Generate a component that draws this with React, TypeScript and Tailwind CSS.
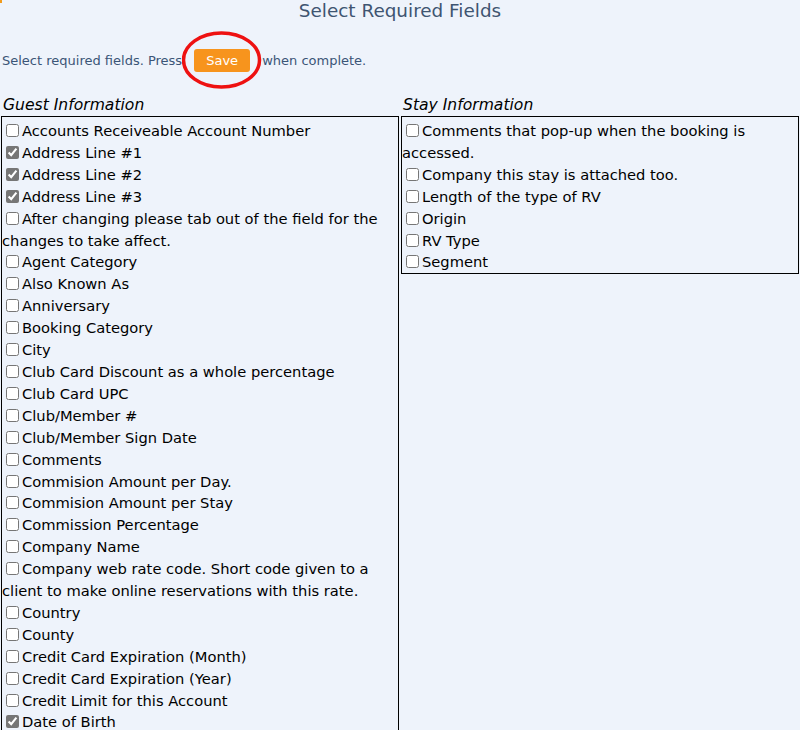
import React from "react";

const guestFields: [string, boolean][] = [
  ["Accounts Receiveable Account Number", false],
  ["Address Line #1", true],
  ["Address Line #2", true],
  ["Address Line #3", true],
  ["After changing please tab out of the field for the changes to take affect.", false],
  ["Agent Category", false],
  ["Also Known As", false],
  ["Anniversary", false],
  ["Booking Category", false],
  ["City", false],
  ["Club Card Discount as a whole percentage", false],
  ["Club Card UPC", false],
  ["Club/Member #", false],
  ["Club/Member Sign Date", false],
  ["Comments", false],
  ["Commision Amount per Day.", false],
  ["Commision Amount per Stay", false],
  ["Commission Percentage", false],
  ["Company Name", false],
  ["Company web rate code. Short code given to a client to make online reservations with this rate.", false],
  ["Country", false],
  ["County", false],
  ["Credit Card Expiration (Month)", false],
  ["Credit Card Expiration (Year)", false],
  ["Credit Limit for this Account", false],
  ["Date of Birth", true],
  ["Email Address", false],
];

const stayFields: [string, boolean][] = [
  ["Comments that pop-up when the booking is accessed.", false],
  ["Company this stay is attached too.", false],
  ["Length of the type of RV", false],
  ["Origin", false],
  ["RV Type", false],
  ["Segment", false],
];

const FieldBox = ({ fields }: { fields: [string, boolean][] }) => (
  <div className="border border-black pt-[3px]">
    {fields.map(([label, checked]) => (
      <div key={label} className="leading-[21.9px]">
        <input
          type="checkbox"
          defaultChecked={checked}
          className="accent-[#767676] mt-[3px] mr-[3px] mb-[3px] ml-[4px] align-[-1px]"
        />
        {label}
      </div>
    ))}
  </div>
);

export default function App() {
  return (
    <div
      className="relative min-h-[730px] bg-[#eef3fb] text-black text-[14.7px] overflow-hidden"
      style={{ fontFamily: '"DejaVu Sans", sans-serif' }}
    >
      <div className="absolute left-0 top-0 w-[2px] h-[3px] bg-[#f29b1c]" />
      <h1 className="text-center text-[18.4px] leading-[22px] text-[#3f5571]">
        Select Required Fields
      </h1>

      <div className="mt-[27px] flex items-center text-[13px] text-[#3b5577] pl-[2px]">
        <span>Select required fields. Press</span>
        <div className="relative mx-[12px]">
          <button className="bg-[#f7941d] text-white rounded-[3px] w-[56px] h-[23px] text-[13px]">
            Save
          </button>
          <svg
            className="absolute left-[-12px] top-[-18px] pointer-events-none"
            width="80"
            height="60"
            viewBox="0 0 80 60"
          >
            <ellipse cx="39.5" cy="29" rx="38" ry="27" fill="none" stroke="#ee1111" strokeWidth="3.5" />
          </svg>
        </div>
        <span>when complete.</span>
      </div>

      <div className="mt-[23px] grid grid-cols-2">
        <div className="px-[1px]">
          <h2 className="italic text-[15.6px] leading-[20px] pl-[2px] mb-[1px]">Guest Information</h2>
          <FieldBox fields={guestFields} />
        </div>
        <div className="px-[1px]">
          <h2 className="italic text-[15.6px] leading-[20px] pl-[2px] mb-[1px]">Stay Information</h2>
          <FieldBox fields={stayFields} />
        </div>
      </div>
    </div>
  );
}
